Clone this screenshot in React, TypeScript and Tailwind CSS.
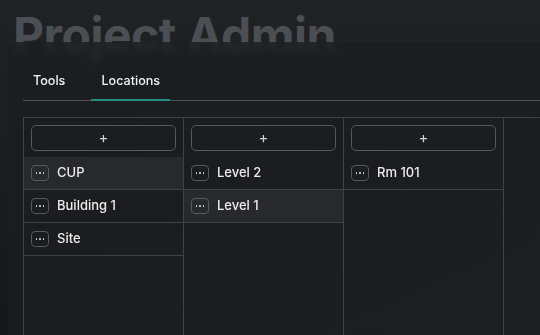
import React from "react";

type Col = { items: string[]; selected?: number };

const COLUMNS: Col[] = [
  { items: ["CUP", "Building 1", "Site"], selected: 0 },
  { items: ["Level 2", "Level 1"], selected: 1 },
  { items: ["Rm 101"] },
];

function MoreButton() {
  return (
    <button className="flex h-4 w-[18px] shrink-0 items-center justify-center gap-[2px] rounded-[4px] border border-[#56595d]">
      <span className="h-[1.5px] w-[1.5px] rounded-full bg-[#e6e6e6]" />
      <span className="h-[1.5px] w-[1.5px] rounded-full bg-[#e6e6e6]" />
      <span className="h-[1.5px] w-[1.5px] rounded-full bg-[#e6e6e6]" />
    </button>
  );
}

function Column({ col }: { col: Col }) {
  return (
    <div className="flex w-[160px] shrink-0 flex-col border-r border-[#3f4245]">
      <div className="px-[7px] pt-[7px] pb-[6px]">
        <button className="flex h-[26px] w-full items-center justify-center rounded-[5px] border border-[#55585c] text-[15px] leading-none text-[#cfd0d2]">
          +
        </button>
      </div>
      {col.items.map((item, i) => (
        <div
          key={item}
          className={
            "flex h-[33px] items-center gap-2 border-b border-[#3f4245] px-[7px] " +
            (col.selected === i ? "bg-[#27292c]" : "")
          }
        >
          <MoreButton />
          <span className="text-[13px] font-medium text-[#ececec]">{item}</span>
        </div>
      ))}
    </div>
  );
}

export default function App() {
  return (
    <div
      className="h-[335px] w-[540px] overflow-hidden bg-gradient-to-b from-[#202326] to-[#151719]"
      style={{ fontFamily: "Inter, 'Noto Sans', sans-serif" }}
    >
      <h1 className="mt-[6px] pl-[13px] text-[48px] font-bold leading-[58px] tracking-[-0.5px] text-[#4b4e52]">
        Project Admin
      </h1>
      <div className="relative -mt-[22px] ml-2 h-[300px] rounded-tl-lg bg-[#1b1d20]/75 pl-[15px] backdrop-blur-[4px]">
        <div className="flex gap-4 border-b border-[#505356] pt-[27px]">
          <div className="px-[10px] pb-[9px] pt-[3px] text-[12.6px] font-medium text-[#f2f2f2]">Tools</div>
          <div className="relative px-[10px] pb-[9px] pt-[3px] text-[12.6px] font-medium text-[#f2f2f2]">
            Locations
            <span className="absolute -bottom-[1px] left-0 right-0 h-[2px] bg-[#1f8f84]" />
          </div>
        </div>
        <div className="mt-4 flex h-[220px] border-l border-t border-[#3f4245] bg-gradient-to-br from-[#1a1c1e] to-[#1c1e21]">
          {COLUMNS.map((c, i) => (
            <Column key={i} col={c} />
          ))}
        </div>
      </div>
    </div>
  );
}
